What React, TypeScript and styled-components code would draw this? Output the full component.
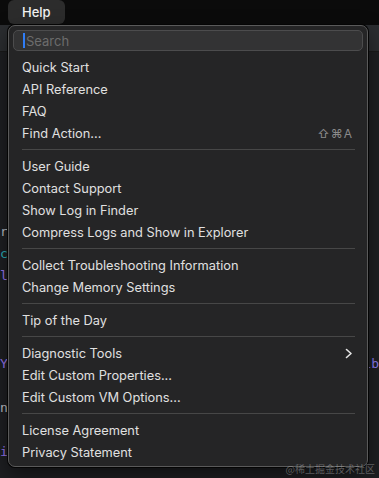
import React from 'react';
import styled, { createGlobalStyle } from 'styled-components';

const GlobalStyle = createGlobalStyle`
  html, body {
    margin: 0;
    padding: 0;
    background: #1e1f22;
    overflow: hidden;
  }
  * { box-sizing: border-box; }
`;

const Screen = styled.div`
  position: relative;
  width: 379px;
  height: 478px;
  overflow: hidden;
  background: #1e1f22;
  font-family: Inter, "Liberation Sans", sans-serif;
`;

const MenuBar = styled.div`
  display: flex;
  align-items: stretch;
  height: 25px;
  padding-left: 8px;
  background: #0b0b0b;
`;

const BarButton = styled.div<{ $active?: boolean }>`
  display: flex;
  align-items: center;
  padding: 0 14px;
  height: 24px;
  border-radius: 6px;
  color: #f2f2f2;
  font-size: 13px;
  font-weight: 500;
  background: ${(p) => (p.$active ? '#2c2c2c' : 'transparent')};
`;

const TabStrip = styled.div`
  height: 27px;
  background: #2b2d30;
  border-bottom: 1px solid #1a1a1a;
`;

const Editor = styled.div`
  padding-top: 15px;
  font-family: "DejaVu Sans Mono", monospace;
  font-size: 13px;
`;

const CodeLine = styled.div`
  display: flex;
  justify-content: space-between;
  height: 22px;
  line-height: 22px;
  white-space: pre;
`;

const Token = styled.span<{ $color: string }>`
  color: ${(p) => p.$color};
`;

const Menu = styled.div`
  position: absolute;
  left: 8px;
  top: 25px;
  width: 360px;
  height: 442px;
  padding: 4px 0 3px;
  display: flex;
  flex-direction: column;
  background: #252526;
  border: 1px solid #5a5a5a;
  border-radius: 7px;
  box-shadow: 0 0 0 1px #050505, 0 8px 20px rgba(0, 0, 0, 0.5);
`;

const SearchBox = styled.div`
  display: flex;
  align-items: center;
  height: 21px;
  margin: 0 4px 5px 4px;
  padding-left: 9px;
  background: #333334;
  border: 1px solid #4c4c4d;
  border-radius: 5px;
  color: #6c6c6c;
  font-size: 13px;
`;

const Caret = styled.span`
  width: 2px;
  height: 15px;
  margin-right: 1px;
  background: #2f7df6;
`;

const Item = styled.div`
  display: flex;
  align-items: center;
  justify-content: space-between;
  height: 22px;
  padding: 0 14px 0 13px;
  color: #e0e0e0;
  font-size: 12.8px;
`;

const Shortcut = styled.span`
  color: #8b8b8b;
  font-size: 12px;
  letter-spacing: 1px;
`;

const Separator = styled.div`
  height: 1px;
  margin: 5px 12px 5px 13px;
  background: #474747;
`;

const Watermark = styled.div`
  position: absolute;
  right: 4px;
  bottom: 2px;
  color: rgba(200, 200, 200, 0.4);
  font-family: "Noto Sans CJK SC", sans-serif;
  font-size: 10px;
`;

type Entry = { label: string; shortcut?: string; submenu?: boolean } | 'sep';

const entries: Entry[] = [
  { label: 'Quick Start' },
  { label: 'API Reference' },
  { label: 'FAQ' },
  { label: 'Find Action...', shortcut: '⇧⌘A' },
  'sep',
  { label: 'User Guide' },
  { label: 'Contact Support' },
  { label: 'Show Log in Finder' },
  { label: 'Compress Logs and Show in Explorer' },
  'sep',
  { label: 'Collect Troubleshooting Information' },
  { label: 'Change Memory Settings' },
  'sep',
  { label: 'Tip of the Day' },
  'sep',
  { label: 'Diagnostic Tools', submenu: true },
  { label: 'Edit Custom Properties...' },
  { label: 'Edit Custom VM Options...' },
  'sep',
  { label: 'License Agreement' },
  { label: 'Privacy Statement' },
];

// left / right ends of the code lines that peek out around the menu
const code: [string, string, string, string][] = [
  ['', '#bcbec4', '', '#bcbec4'],
  ['', '#bcbec4', '', '#bcbec4'],
  ['', '#bcbec4', '', '#bcbec4'],
  ['', '#bcbec4', '', '#bcbec4'],
  ['', '#bcbec4', '', '#bcbec4'],
  ['', '#bcbec4', '', '#bcbec4'],
  ['', '#bcbec4', '', '#bcbec4'],
  ['r', '#bcbec4', '', '#bcbec4'],
  ['c', '#2aacb8', '', '#bcbec4'],
  ['lv', '#9876f0', '', '#bcbec4'],
  [' .', '#bcbec4', '', '#bcbec4'],
  ['', '#bcbec4', '', '#bcbec4'],
  ['', '#bcbec4', '', '#bcbec4'],
  ['Y', '#9876f0', 'ib', '#8c7cf0'],
  ['', '#bcbec4', '', '#bcbec4'],
  ['n', '#bcbec4', '', '#bcbec4'],
  ['', '#bcbec4', '', '#bcbec4'],
  ['ic', '#9876f0', '', '#bcbec4'],
];

function Chevron() {
  return (
    <svg width="8" height="11" viewBox="0 0 8 11" fill="none">
      <path d="M1.5 1.5L6 5.5L1.5 9.5" stroke="#e6e6e6" strokeWidth="1.6" strokeLinecap="round" strokeLinejoin="round" />
    </svg>
  );
}

export default function App() {
  return (
    <Screen>
      <GlobalStyle />
      <MenuBar>
        <BarButton $active>Help</BarButton>
      </MenuBar>
      <TabStrip />
      <Editor>
        {code.map(([left, lc, right, rc], i) => (
          <CodeLine key={i}>
            <Token $color={lc}>{left}</Token>
            <Token $color={rc}>{right}</Token>
          </CodeLine>
        ))}
      </Editor>

      <Menu>
        <SearchBox>
          <Caret />
          Search
        </SearchBox>
        {entries.map((e, i) =>
          e === 'sep' ? (
            <Separator key={i} />
          ) : (
            <Item key={i}>
              <span>{e.label}</span>
              {e.shortcut && <Shortcut>{e.shortcut}</Shortcut>}
              {e.submenu && <Chevron />}
            </Item>
          )
        )}
      </Menu>
      <Watermark>@稀土掘金技术社区</Watermark>
    </Screen>
  );
}
